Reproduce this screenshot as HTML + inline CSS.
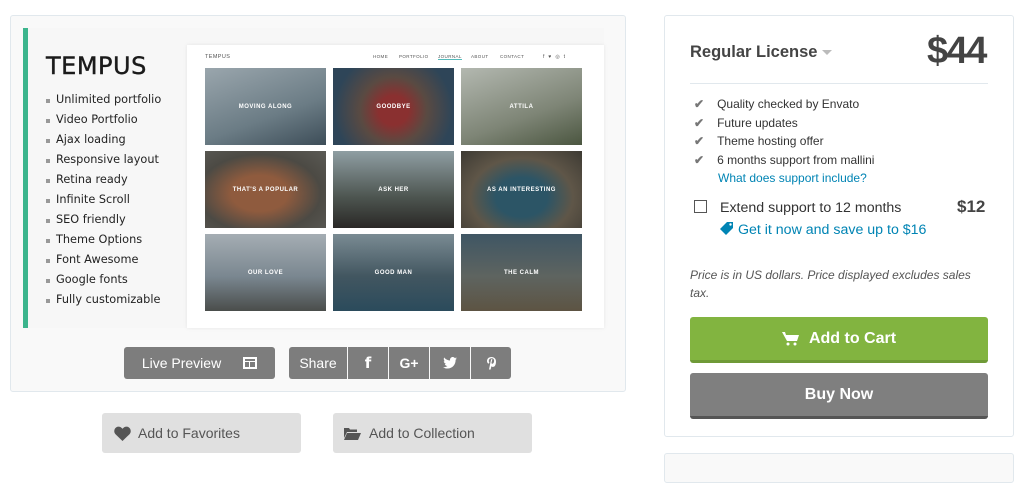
<!DOCTYPE html>
<html><head><meta charset="utf-8"><style>
*{margin:0;padding:0;box-sizing:border-box}
body{width:1020px;height:467px;background:#fff;font-family:"Liberation Sans",sans-serif;position:relative;overflow:hidden;color:#333}
.a{position:absolute}
.lp{left:10px;top:15px;width:616px;height:377px;background:#f9f9f9;border:1px solid #e1e8ed;border-radius:3px}
.img{left:23px;top:28px;width:581px;height:300px;background:#f7f7f7}
.bar{left:23px;top:28px;width:5px;height:300px;background:#3cb58d}
.feat{left:46px;font-size:11.3px;color:#222;font-family:"DejaVu Sans",sans-serif}
.feat::before{content:"";position:absolute;left:0;top:6px;width:4px;height:4px;background:#999}
.feat span{margin-left:10px}
.shot{left:187px;top:45px;width:417px;height:283px;background:#fff;box-shadow:0 0 4px rgba(0,0,0,.08)}
.t{position:absolute;width:121px;height:77px;color:#fff;font-size:6px;letter-spacing:.5px;display:flex;align-items:center;justify-content:center;font-weight:bold}
.nav{position:absolute;top:9px;font-size:4.5px;color:#555;letter-spacing:.4px}
.btn{background:#7d7d7d;color:#fff;border-radius:3px;font-size:14px;display:flex;align-items:center;justify-content:center}
.sh{position:absolute;top:0;height:32px;border-left:1px solid #f9f9f9;display:flex;align-items:center;justify-content:center;font-weight:bold;font-size:15px}
.gb{background:#e0e0e0;border-radius:3px;color:#555;font-size:14px;display:flex;align-items:center}
.rp{left:664px;top:15px;width:350px;height:422px;border:1px solid #e1e8ed;border-radius:3px;background:#fff}
.ck{left:694px;font-size:12px;color:#333}
.ck b{color:#777;margin-right:13px;font-size:12px}
</style></head><body>
<div class="a lp"></div>
<div class="a img"></div>
<div class="a bar"></div>
<div class="a" style="left:46px;top:52px;font-size:24px;color:#1b1b1b;font-family:'DejaVu Sans',sans-serif;letter-spacing:.5px;-webkit-text-stroke:.4px #1b1b1b">TEMPUS</div>
<div class="a feat" style="top:93px"><span>Unlimited portfolio</span></div>
<div class="a feat" style="top:113px"><span>Video Portfolio</span></div>
<div class="a feat" style="top:133px"><span>Ajax loading</span></div>
<div class="a feat" style="top:153px"><span>Responsive layout</span></div>
<div class="a feat" style="top:173px"><span>Retina ready</span></div>
<div class="a feat" style="top:193px"><span>Infinite Scroll</span></div>
<div class="a feat" style="top:213px"><span>SEO friendly</span></div>
<div class="a feat" style="top:233px"><span>Theme Options</span></div>
<div class="a feat" style="top:253px"><span>Font Awesome</span></div>
<div class="a feat" style="top:273px"><span>Google fonts</span></div>
<div class="a feat" style="top:293px"><span>Fully customizable</span></div>
<div class="a shot">
<div class="nav" style="left:18px;font-size:5.5px">TEMPUS</div>
<div class="nav" style="left:186px">HOME</div>
<div class="nav" style="left:212px">PORTFOLIO</div>
<div class="nav" style="left:251px;border-bottom:1px solid #5bb">JOURNAL</div>
<div class="nav" style="left:284px">ABOUT</div>
<div class="nav" style="left:313px">CONTACT</div>
<div class="nav" style="left:356px;font-size:5px">f &nbsp;♥ &nbsp;◎ &nbsp;t</div>
<div class="t" style="left:18px;top:23px;background:linear-gradient(160deg,#9aa6ad,#6b7c85 60%,#3d4d58)">MOVING ALONG</div>
<div class="t" style="left:146px;top:23px;background:radial-gradient(circle at 50% 55%,#8a3030 20%,#5a4a42 45%,#2e4558 80%)">GOODBYE</div>
<div class="t" style="left:274px;top:23px;background:linear-gradient(160deg,#b3b8b0,#7e8576 60%,#4b5640)">ATTILA</div>
<div class="t" style="left:18px;top:106px;background:radial-gradient(ellipse at 45% 55%,#8f5b3e 30%,#4c4a44 65%,#5b5a55)">THAT'S A POPULAR</div>
<div class="t" style="left:146px;top:106px;background:linear-gradient(180deg,#8f9ea3,#4d5550 60%,#2a2826)">ASK HER</div>
<div class="t" style="left:274px;top:106px;background:radial-gradient(ellipse at 50% 60%,#2c5566 30%,#5f5648 60%,#3d3a33)">AS AN INTERESTING</div>
<div class="t" style="left:18px;top:189px;background:linear-gradient(180deg,#a5adb3,#7a8790 55%,#4a4d4b)">OUR LOVE</div>
<div class="t" style="left:146px;top:189px;background:linear-gradient(180deg,#7a8b93,#425660 55%,#2b4b5c)">GOOD MAN</div>
<div class="t" style="left:274px;top:189px;background:linear-gradient(180deg,#3f5664,#5e6460 55%,#5d5443)">THE CALM</div>
</div>
<div class="a btn" style="left:124px;top:347px;width:151px;height:32px"><span>Live Preview</span><span style="margin-left:22px;width:14px;height:12px;border:2px solid #fff;display:inline-block;position:relative"><span style="position:absolute;left:0;top:2px;width:10px;height:1px;background:#fff"></span><span style="position:absolute;left:4px;top:2px;width:1px;height:6px;background:#fff"></span></span></div>
<div class="a btn" style="left:289px;top:347px;width:222px;height:32px;display:block">
<div class="sh" style="left:0;width:58px;border:none;font-weight:normal;font-size:14px">Share</div>
<div class="sh" style="left:58px;width:41px;font-family:'DejaVu Sans',sans-serif">f</div>
<div class="sh" style="left:99px;width:41px;font-size:14px">G+</div>
<div class="sh" style="left:140px;width:41px"><svg width="14" height="12" viewBox="0 0 14 12"><path d="M14 1.5c-.5.2-1 .4-1.6.4.6-.4 1-.9 1.2-1.5-.6.3-1.1.5-1.8.7C11.3.4 10.6 0 9.8 0 8.2 0 7 1.3 7 2.9c0 .2 0 .4.1.6C4.7 3.4 2.6 2.3 1.2.5.9.9.8 1.4.8 2c0 1 .5 1.9 1.3 2.4-.5 0-.9-.1-1.3-.4 0 1.4 1 2.6 2.3 2.9-.4.1-.8.1-1.3.1.4 1.2 1.4 2 2.7 2-1 .8-2.2 1.2-3.6 1.2H0c1.3.8 2.8 1.3 4.4 1.3 5.3 0 8.2-4.4 8.2-8.3v-.4c.6-.4 1-.9 1.4-1.3z" fill="#fff"/></svg></div>
<div class="sh" style="left:181px;width:41px"><svg width="11" height="14" viewBox="0 0 11 14"><path d="M5.5 1C2.8 1 1 2.8 1 5c0 1.3.6 2.3 1.5 2.7L3.4 6.6C3 6.1 2.8 5.6 2.8 5c0-1.6 1.2-2.7 2.8-2.7 1.5 0 2.5 1 2.5 2.4 0 1.7-.8 3-1.8 3-.6 0-1-.5-.8-1.1l.9-3.4H5.1L3 13.5h1.6l.8-3.3c.4.4 1 .7 1.6.7C9 10.9 10 8.5 10 5.4 10 2.9 8.1 1 5.5 1z" fill="#fff"/></svg></div>
</div>
<div class="a gb" style="left:102px;top:413px;width:199px;height:40px"><svg style="margin-left:12px" width="17" height="15" viewBox="0 0 17 15"><path d="M8.5 15L1.5 8.2C-.5 6.2 0 2.6 2.4 1.2 4.5 0 6.8.8 8.5 2.7 10.2.8 12.5 0 14.6 1.2 17 2.6 17.5 6.2 15.5 8.2z" fill="#555"/></svg><span style="margin-left:7px">Add to Favorites</span></div>
<div class="a gb" style="left:333px;top:413px;width:199px;height:40px"><svg style="margin-left:11px" width="17" height="13" viewBox="0 0 17 13"><path d="M0 1h5l1 1.5h7V5H3L0 11z M3 6h14l-3 7H0z" fill="#555"/></svg><span style="margin-left:8px">Add to Collection</span></div>

<div class="a rp"></div>
<div class="a" style="left:690px;top:43px;font-size:16.5px;font-weight:bold;color:#444">Regular License <span style="display:inline-block;border:5px solid transparent;border-top:5px solid #bbb;vertical-align:middle;margin-top:4px"></span></div>
<div class="a" style="left:927px;top:30px;font-size:38px;font-weight:bold;color:#444;letter-spacing:-1.5px">$44</div>
<div class="a" style="left:690px;top:83px;width:298px;height:1px;background:#e1e8ed"></div>
<div class="a ck" style="top:97px"><b>✔</b>Quality checked by Envato</div>
<div class="a ck" style="top:116px"><b>✔</b>Future updates</div>
<div class="a ck" style="top:134px"><b>✔</b>Theme hosting offer</div>
<div class="a ck" style="top:153px"><b>✔</b>6 months support from mallini</div>
<div class="a" style="left:718px;top:171px;font-size:12px;color:#0084b4">What does support include?</div>
<div class="a" style="left:694px;top:200px;width:13px;height:13px;border:1px solid #555"></div>
<div class="a" style="left:720px;top:200px;font-size:14.2px;color:#333">Extend support to 12 months</div>
<div class="a" style="left:957px;top:197px;font-size:17px;font-weight:bold;color:#444">$12</div>
<div class="a" style="left:720px;top:222px;font-size:14.2px;color:#0084b4"><svg width="14" height="13" viewBox="0 0 14 13" style="vertical-align:-1px"><path d="M0 7L7 0h6v6l-7 7z" fill="#0084b4"/><circle cx="10.5" cy="2.5" r="1.2" fill="#fff"/></svg> Get it now and save up to $16</div>
<div class="a" style="left:690px;top:266px;width:300px;font-size:12px;font-style:italic;color:#555;line-height:18px">Price is in US dollars. Price displayed excludes sales tax.</div>
<div class="a" style="left:690px;top:317px;width:298px;height:46px;background:#82b440;border-bottom:3px solid #6f9a37;border-radius:3px;color:#fff;font-weight:bold;font-size:16px;display:flex;align-items:center;justify-content:center"><svg width="17" height="15" viewBox="0 0 17 15" style="margin-right:10px"><path d="M0 1h3l1 3h13l-2 6H5z" fill="#fff"/><circle cx="6" cy="13" r="1.5" fill="#fff"/><circle cx="13" cy="13" r="1.5" fill="#fff"/></svg>Add to Cart</div>
<div class="a" style="left:690px;top:373px;width:298px;height:46px;background:#7f7f7f;border-bottom:3px solid #555;border-radius:3px;color:#fff;font-weight:bold;font-size:16px;display:flex;align-items:center;justify-content:center">Buy Now</div>
<div class="a" style="left:664px;top:453px;width:350px;height:30px;border:1px solid #e1e8ed;border-radius:3px;background:#f9f9f9"></div>
</body></html>
